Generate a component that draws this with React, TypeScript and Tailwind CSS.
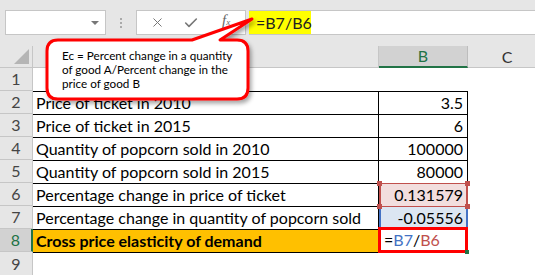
import { X, Check } from 'lucide-react'

const rows = [
  { n: 2, label: 'Price of ticket in 2010', value: '3.5' },
  { n: 3, label: 'Price of ticket in 2015', value: '6' },
  { n: 4, label: 'Quantity of popcorn sold in 2010', value: '100000' },
  { n: 5, label: 'Quantity of popcorn sold in 2015', value: '80000' },
]

function Corner({ className }: { className: string }) {
  return <span className={`absolute w-[5px] h-[5px] bg-[#c0504d] ${className}`} />
}

export default function App() {
  return (
    <div className="relative w-[535px] h-[275px] overflow-hidden bg-white font-['Lato',sans-serif] text-black">
      {/* toolbar */}
      <div className="h-[46px] bg-[#e6e6e6] flex items-start pt-[10px]">
        <div className="ml-[5px] w-[101px] h-[25px] bg-white border border-[#c6c6c6] flex items-center justify-end pr-[6px]">
          <span className="w-0 h-0 border-l-[4px] border-r-[4px] border-t-[4px] border-l-transparent border-r-transparent border-t-[#777]" />
        </div>
        <div className="ml-[14px] h-[25px] flex flex-col justify-center gap-[2px]">
          <span className="w-[2px] h-[2px] bg-[#aaa]" />
          <span className="w-[2px] h-[2px] bg-[#aaa]" />
          <span className="w-[2px] h-[2px] bg-[#aaa]" />
        </div>
        <div className="ml-[14px] w-[110px] h-[25px] bg-white border border-[#c6c6c6] flex items-center pl-[13px] text-[#777]">
          <X size={15} strokeWidth={1.6} />
          <Check size={16} strokeWidth={2.4} className="ml-[18px]" />
          <span className="ml-[23px] -mt-[4px] font-['Liberation_Serif',serif] italic text-[15px] leading-none text-[#666]">f<span className="text-[9px]">x</span></span>
        </div>
        <div className="ml-[3px] flex-1 h-[25px] bg-white border-y border-[#c6c6c6] flex items-center">
          <span className="h-full bg-[#ffff00] w-[62px] flex items-center pl-[7px] text-[16px] text-[#222]">=B7/B6</span>
        </div>
      </div>

      {/* grid */}
      <div className="grid grid-cols-[33px_346px_89px_1fr] grid-rows-[22px_repeat(9,23px)] text-[16px]">
        {/* header row */}
        <div className="bg-[#e6e6e6] border-b border-r border-[#c6c6c6] flex items-end justify-end pr-[3px] pb-[3px]">
          <svg width="15" height="15" viewBox="0 0 15 15">
            <path d="M15 0 V15 H0 Z" fill="#b5b5b5" />
          </svg>
        </div>
        <div className="bg-[#e6e6e6] border-b border-r border-[#c6c6c6]" />
        <div className="bg-[#d2d2d2] border-b-2 border-[#217346] border-r border-r-[#bdbdbd] flex items-center justify-center text-[#217346]">B</div>
        <div className="bg-[#e6e6e6] border-b border-[#c6c6c6] flex items-center text-[#333]"><span className="w-[78px] text-center">C</span></div>

        {/* row 1 */}
        <div className="bg-[#e6e6e6] border-r border-b border-[#c6c6c6] flex items-center justify-center text-[#444]">1</div>
        <div />
        <div />
        <div />

        {rows.map((r) => (
          <div key={r.n} className="contents">
            <div className="bg-[#e6e6e6] border-r border-b border-[#c6c6c6] flex items-center justify-center text-[#444]">{r.n}</div>
            <div className="border-t border-r border-black flex items-center pl-[3px]">{r.label}</div>
            <div className="border-t border-r border-black flex items-center justify-end pr-[4px]">{r.value}</div>
            <div />
          </div>
        ))}

        {/* row 6 */}
        <div className="bg-[#e6e6e6] border-r border-b border-[#c6c6c6] flex items-center justify-center text-[#444]">6</div>
        <div className="border-t border-r border-black flex items-center pl-[3px]">Percentage change in price of ticket</div>
        <div className="relative bg-[#f2dede] border-2 border-[#c0504d] border-t-[1.5px] border-b-0 flex items-center justify-end pr-[3px]">
          0.131579
          <Corner className="-left-[4px] -top-[3px]" />
          <Corner className="-right-[4px] -top-[3px]" />
          <Corner className="-left-[4px] -bottom-[3px]" />
          <Corner className="-right-[4px] -bottom-[3px]" />
        </div>
        <div />

        {/* row 7 */}
        <div className="bg-[#e6e6e6] border-r border-b border-[#c6c6c6] flex items-center justify-center text-[#444]">7</div>
        <div className="border-t border-r border-black flex items-center pl-[3px]">Percentage change in quantity of popcorn sold</div>
        <div className="bg-[#dce6f2] border-x-2 border-[#4472c4] border-t border-t-[#c0504d] flex items-center justify-end pr-[3px]">-0.05556</div>
        <div />

        {/* row 8 */}
        <div className="bg-[#d2d2d2] border-r-2 border-r-[#217346] border-b border-b-[#c6c6c6] flex items-center justify-center text-[#217346]">8</div>
        <div className="bg-[#ffc000] border-t border-r border-black flex items-center pl-[3px] font-bold">Cross price elasticity of demand</div>
        <div className="relative border-[3px] border-[#ff0000] -ml-px -mt-[2px] -mb-px flex items-center pl-[3px]">
          =<span className="text-[#4472c4]">B7</span>/<span className="text-[#c0504d]">B6</span>
          <span className="absolute -right-[4px] -bottom-[4px] w-[4px] h-[4px] bg-[#217346]" />
        </div>
        <div />

        {/* row 9 */}
        <div className="bg-[#e6e6e6] border-r border-[#c6c6c6] flex items-center justify-center text-[#444]">9</div>
        <div className="border-t border-black" />
        <div />
        <div />
      </div>

      {/* callout */}
      <svg className="absolute left-0 top-0 pointer-events-none" width="535" height="275">
        <defs>
          <filter id="sh" x="-10%" y="-10%" width="130%" height="140%">
            <feDropShadow dx="2" dy="3" stdDeviation="2" floodColor="#000" floodOpacity="0.35" />
          </filter>
        </defs>
        <path
          d="M58 40 H192 L252 19 L220 40 H237 Q248 40 248 51 V88 Q248 99 237 99 H58 Q47 99 47 88 V51 Q47 40 58 40 Z"
          fill="#fff"
          stroke="#ff0000"
          strokeWidth="3"
          strokeLinejoin="round"
          filter="url(#sh)"
        />
      </svg>
      <div className="absolute left-[62px] top-[48px] text-[11.7px] leading-[14px] text-black font-['Lato',sans-serif]">
        <div>Ec = Percent change in a quantity</div>
        <div>of good A/Percent change in the</div>
        <div>price of good B</div>
      </div>
    </div>
  )
}
